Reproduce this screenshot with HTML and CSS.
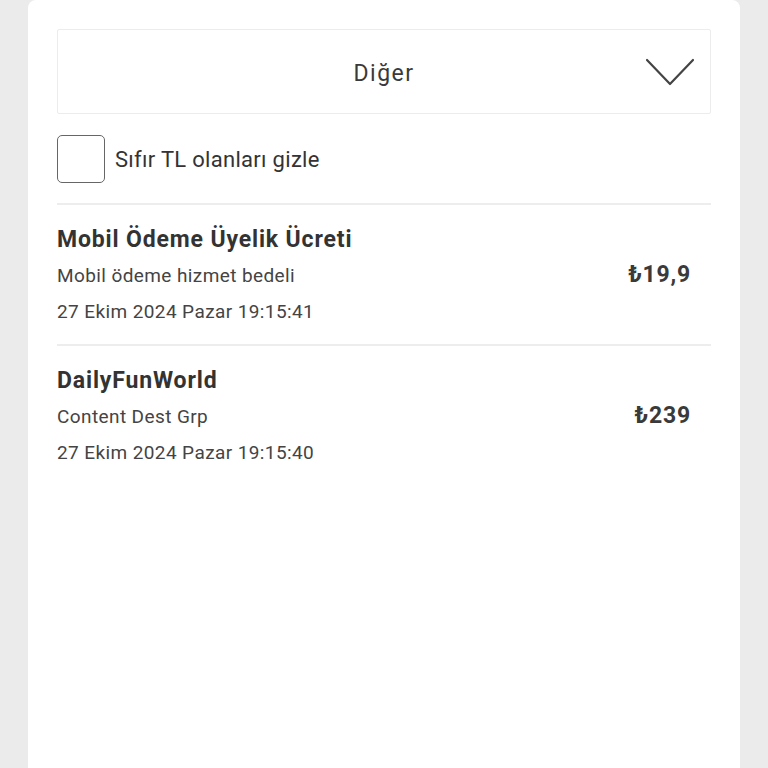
FILE: index.html
```html
<!DOCTYPE html>
<html lang="tr">
<head>
<meta charset="utf-8">
<title>Diğer</title>
<link rel="stylesheet" href="styles.css">
</head>
<body>
<main class="card">
  <div class="select">
    <span class="select-label">Diğer</span>
    <svg class="chevron" width="50" height="28" viewBox="0 0 50 28"><path d="M2 2 L25 26 L48 2" fill="none" stroke="#444" stroke-width="2.2" stroke-linecap="round" stroke-linejoin="round"/></svg>
  </div>
  <label class="check-row">
    <span class="checkbox"></span>
    <span class="check-label">Sıfır TL olanları gizle</span>
  </label>
  <ul class="list">
    <li class="item">
      <div class="info">
        <div class="title">Mobil Ödeme Üyelik Ücreti</div>
        <div class="sub">Mobil ödeme hizmet bedeli</div>
        <div class="sub">27 Ekim 2024 Pazar 19:15:41</div>
      </div>
      <div class="price">₺19,9</div>
    </li>
    <li class="item">
      <div class="info">
        <div class="title">DailyFunWorld</div>
        <div class="sub">Content Dest Grp</div>
        <div class="sub">27 Ekim 2024 Pazar 19:15:40</div>
      </div>
      <div class="price">₺239</div>
    </li>
  </ul>
</main>
</body>
</html>
```
FILE: styles.css
```css
* { box-sizing: border-box; }
html, body { margin: 0; padding: 0; }
body {
  background: #ebebeb;
  font-family: Roboto, "Liberation Sans", sans-serif;
  color: #333;
}
.card {
  margin: 0 28px;
  background: #fff;
  min-height: 768px;
  padding: 29px 29px;
  border-radius: 8px 8px 0 0;
}
.select {
  height: 85px;
  border: 1px solid #ececec;
  border-radius: 2px;
  display: flex;
  align-items: center;
  justify-content: center;
  position: relative;
  padding-top: 3px;
}
.select-label {
  font-size: 23px;
  letter-spacing: 1.5px;
  color: #3a3a3a;
}
.chevron {
  position: absolute;
  right: 15px;
  top: 28px;
}
.check-row {
  display: flex;
  align-items: center;
  gap: 10px;
  margin-top: 21px;
  height: 48px;
}
.checkbox {
  width: 48px;
  height: 48px;
  border: 1.5px solid #666;
  border-radius: 5px;
}
.check-label {
  font-size: 22px;
  letter-spacing: 0.3px;
  color: #333;
}
.list {
  list-style: none;
  margin: 20px 0 0;
  padding: 0;
}
.item {
  border-top: 2px solid #ededed;
  display: flex;
  align-items: center;
  justify-content: space-between;
  padding: 17px 20px 14px 0;
}
.title {
  font-size: 23px;
  font-weight: 700;
  letter-spacing: 0.85px;
  line-height: 36px;
  color: #333;
}
.sub {
  font-size: 19px;
  letter-spacing: 0.4px;
  line-height: 36px;
  color: #444;
}
.price {
  font-size: 23px;
  font-weight: 700;
  letter-spacing: 0.8px;
  color: #3a3a3a;
  padding-bottom: 4px;
}
```
